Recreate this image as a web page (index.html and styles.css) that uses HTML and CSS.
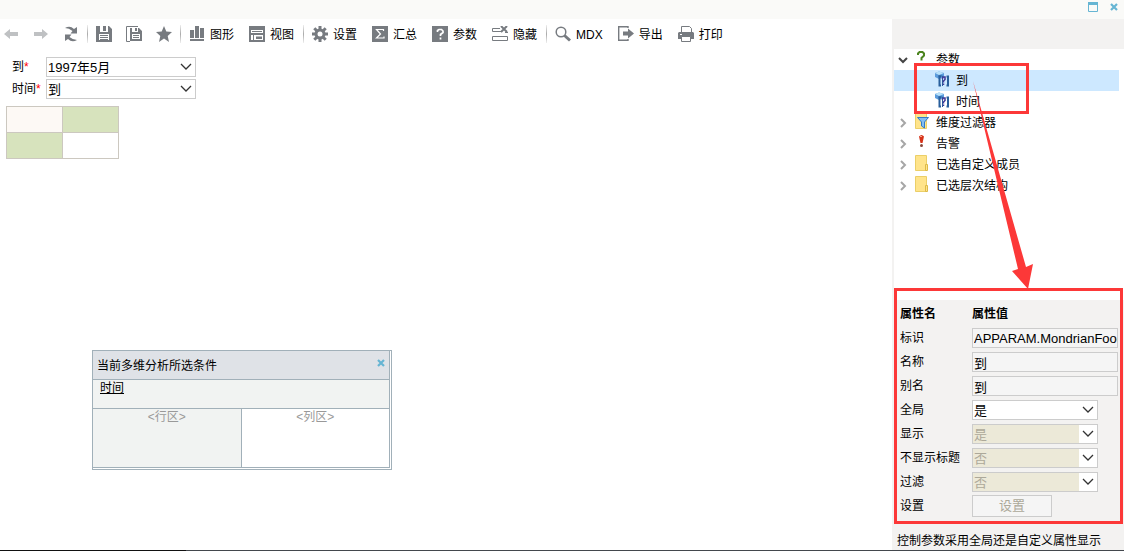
FILE: index.html
```html
<!DOCTYPE html>
<html lang="zh-CN">
<head>
    <meta charset="utf-8">
    <meta name="viewport" content="width=device-width, initial-scale=1.0">
    <title>多维分析</title>
    <link rel="stylesheet" href="styles.css">
</head>
<body>

    <!-- 窗口标题栏 -->
    <header class="titlebar">
        <button class="icon-button" aria-label="最大化">
            <svg width="10" height="10" viewBox="0 0 10 10"><path d="M.5 1.5h9v8h-9z" fill="none" stroke="#66b5d3"/><path d="M0 0h10v3H0z" fill="#66b5d3"/></svg>
        </button>
        <button class="icon-button" aria-label="关闭">
            <svg width="8" height="8" viewBox="0 0 8 8"><path d="M1 1l6 6M7 1L1 7" stroke="#66b5d3" stroke-width="2.2"/></svg>
        </button>
    </header>

    <div class="workspace">
        <main class="main">

            <!-- 工具栏 -->
            <div class="toolbar">
                <button class="tool" aria-label="后退" disabled>
                    <svg width="16" height="16" viewBox="0 0 16 16"><path d="M1 8l6-5v3h8v4H7v3z" fill="#bfc1c3"/></svg>
                </button>
                <button class="tool" aria-label="前进" disabled>
                    <svg width="16" height="16" viewBox="0 0 16 16"><path d="M15 8L9 3v3H1v4h8v3z" fill="#bfc1c3"/></svg>
                </button>
                <button class="tool" aria-label="刷新">
                    <svg width="16" height="16" viewBox="0 0 16 16"><g fill="#777b80"><path d="M2 2q5-3 9 1l3-2v6.500H7.500L9.500 5Q6 2 2 2z"/><path d="M14 14q-5 3-9-1l-3 2V8.500h6.500L6.500 11q3.500 3 7.500 3z"/></g></svg>
                </button>
                <span class="separator"></span>
                <button class="tool" aria-label="保存">
                    <svg width="16" height="16" viewBox="0 0 16 16"><path d="M0 0h4v6h8V0h1l3 3v13H0z" fill="#777b80"/><path d="M7 0h3v5H7z" fill="#777b80"/><path d="M3 8h10v6H3z" fill="#fff"/><path d="M4 9.500h8M4 11.500h8M4 13.500h8" stroke="#777b80"/></svg>
                </button>
                <button class="tool" aria-label="另存为">
                    <svg width="16" height="16" viewBox="0 0 16 16"><path d="M12 .5H.5v15H4" fill="none" stroke="#777b80"/><path d="M4 2h2v4h6V2h1l3 3v10H4z" fill="#777b80"/><path d="M9 2h2v3H9z" fill="#777b80"/><path d="M6 8h8v5H6z" fill="#fff"/><path d="M7 9.500h6M7 11.500h6" stroke="#777b80"/></svg>
                </button>
                <button class="tool" aria-label="收藏">
                    <svg width="16" height="16" viewBox="0 0 16 16"><path d="M8 0l2.300 5.500 5.700.5-4.300 3.900L13 16l-5-3.400L3 16l1.300-6.100L0 6l5.700-.5z" fill="#777b80"/></svg>
                </button>
                <span class="separator"></span>
                <button class="tool tool-text">
                    <svg width="16" height="16" viewBox="0 0 16 16"><path d="M1 4h4v8H1zM6 0h4v12H6zM11 2h4v10h-4zM1 13h14v2H1z" fill="#777b80"/></svg>
                    <span>图形</span>
                </button>
                <button class="tool tool-text">
                    <svg width="16" height="16" viewBox="0 0 16 16"><path d="M0 0h16v16H0z" fill="#777b80"/><path d="M2 4h12v3H2zM2 9h2v5H2zM5 9h9v5H5z" fill="#fff"/><path d="M3 5h10v1H3zM7 10.500h6V13H7z" fill="#777b80"/></svg>
                    <span>视图</span>
                </button>
                <span class="separator"></span>
                <button class="tool tool-text">
                    <svg width="16" height="16" viewBox="0 0 16 16"><path d="M8 0v16M0 8h16M2.300 2.300l11.400 11.400M13.700 2.300L2.300 13.700" stroke="#777b80" stroke-width="3"/><circle cx="8" cy="8" r="5.500" fill="#777b80"/><circle cx="8" cy="8" r="2.500" fill="#fff"/></svg>
                    <span>设置</span>
                </button>
                <button class="tool tool-text">
                    <svg width="16" height="16" viewBox="0 0 16 16"><path d="M0 0h16v16H0z" fill="#777b80"/><path d="M11.500 5V3.500h-7L8.500 8l-4 4h7.500v-1.500" fill="none" stroke="#fff" stroke-width="1.200"/></svg>
                    <span>汇总</span>
                </button>
                <button class="tool tool-text">
                    <svg width="16" height="16" viewBox="0 0 16 16"><path d="M0 0h16v16H0z" fill="#777b80"/><path d="M5.500 6V4.500L7 3.500h2.500L11 5v1.500L8.500 8.500V10M8.500 11.500v2" fill="none" stroke="#fff" stroke-width="1.700"/></svg>
                    <span>参数</span>
                </button>
                <button class="tool tool-text">
                    <svg width="16" height="16" viewBox="0 0 16 16"><path d="M8 2.500H.5v3H9M13 6.500h3M.5 10.500h15v4H.5z" fill="none" stroke="#777b80"/><path d="M9 0l6 6M15 0L9 6" stroke="#777b80" stroke-width="2"/></svg>
                    <span>隐藏</span>
                </button>
                <span class="separator"></span>
                <button class="tool tool-text">
                    <svg width="16" height="16" viewBox="0 0 16 16"><circle cx="6" cy="6" r="4.800" fill="none" stroke="#777b80" stroke-width="1.500"/><path d="M9.500 9.500l5.500 5" stroke="#777b80" stroke-width="3"/></svg>
                    <span>MDX</span>
                </button>
                <button class="tool tool-text">
                    <svg width="16" height="16" viewBox="0 0 16 16"><path d="M10 2V.700H.700v13.600H10V13" fill="none" stroke="#777b80" stroke-width="1.400"/><path d="M5 5.500h5V2.500l6 5-6 5V9.500H5z" fill="#777b80"/></svg>
                    <span>导出</span>
                </button>
                <button class="tool tool-text">
                    <svg width="16" height="16" viewBox="0 0 16 16"><path d="M3.500 6V.5h8l2 2V6" fill="#fff" stroke="#777b80"/><path d="M1 6h14l1 1v6H0V7z" fill="#777b80"/><path d="M3.500 10.500h9v5h-9z" fill="#fff" stroke="#777b80"/><path d="M2 8.500h2" stroke="#fff"/></svg>
                    <span>打印</span>
                </button>
            </div>

            <!-- 参数 -->
            <form class="params">
                <label for="paramTo">到<span class="required">*</span></label>
                <select id="paramTo" class="dropdown"><option>1997年5月</option></select>
                <label for="paramTime">时间<span class="required">*</span></label>
                <select id="paramTime" class="dropdown"><option>到</option></select>
            </form>

            <table class="pivot">
                <tr><td class="corner"></td><td class="head"></td></tr>
                <tr><td class="head"></td><td></td></tr>
            </table>

            <!-- 浮动窗口 -->
            <section class="dialog">
                <div class="dialog-inner">
                    <div class="dialog-title">
                        <span>当前多维分析所选条件</span>
                        <button class="icon-button" aria-label="关闭">
                            <svg width="8" height="8" viewBox="0 0 8 8"><path d="M1 1l6 6M7 1L1 7" stroke="#66b5d3" stroke-width="2.200"/></svg>
                        </button>
                    </div>
                    <div class="dialog-filter"><a href="#">时间</a></div>
                    <div class="dialog-areas">
                        <div class="area row-area">&lt;行区&gt;</div>
                        <div class="area">&lt;列区&gt;</div>
                    </div>
                </div>
            </section>
        </main>

        <aside class="sidebar">
            <ul class="tree">
                <li class="node">
                    <svg class="toggle" width="10" height="10" viewBox="0 0 10 10"><path d="M1 3l4 4 4-4" fill="none" stroke="#444" stroke-width="2"/></svg>
                    <svg class="node-icon" width="16" height="16" viewBox="0 0 16 16"><path d="M4 5V3.500L5.500 2h3L10 3.500v2L7.500 8v2.500" fill="none" stroke="#4d8520" stroke-width="2"/></svg>
                    参数
                </li>
                <li class="node child selected">
                    <svg class="node-icon" width="16" height="16" viewBox="0 0 16 16"><path d="M0 2l4-1.500L9 2v4L4 8 0 6z" fill="#5b9bdc"/><path d="M0 2l4-1.500L9 2 4 4z" fill="#b9e2fa"/><path d="M3.500 5h4v10" fill="none" stroke="#285f9c"/><path d="M6 5.500H4.500v9H6M11.500 5.500H13v9h-1.500" fill="none" stroke="#285f9c" stroke-width="2"/><path d="M7.500 8V7L8.500 6h1.500v2.500L8.500 10v1.500M8.500 12.500V14" fill="none" stroke="#3f3797" stroke-width="1.500"/></svg>
                    到
                </li>
                <li class="node child">
                    <svg class="node-icon" width="16" height="16" viewBox="0 0 16 16"><path d="M0 2l4-1.500L9 2v4L4 8 0 6z" fill="#5b9bdc"/><path d="M0 2l4-1.500L9 2 4 4z" fill="#b9e2fa"/><path d="M3.500 5h4v10" fill="none" stroke="#285f9c"/><path d="M6 5.500H4.500v9H6M11.500 5.500H13v9h-1.500" fill="none" stroke="#285f9c" stroke-width="2"/><path d="M7.500 8V7L8.500 6h1.500v2.500L8.500 10v1.500M8.500 12.500V14" fill="none" stroke="#3f3797" stroke-width="1.500"/></svg>
                    时间
                </li>
                <li class="node">
                    <svg class="toggle" width="10" height="10" viewBox="0 0 10 10"><path d="M3 1l4 4-4 4" fill="none" stroke="#a6a6a6" stroke-width="2"/></svg>
                    <svg class="node-icon" width="16" height="16" viewBox="0 0 16 16"><path d="M1.500.5h11v15h-11z" fill="#ffe48b" stroke="#ebcf68"/><path d="M3.500 4.500h11L10.500 9v6l-3-2V9z" fill="#83bdf2" stroke="#327cc8"/></svg>
                    维度过滤器
                </li>
                <li class="node">
                    <svg class="toggle" width="10" height="10" viewBox="0 0 10 10"><path d="M3 1l4 4-4 4" fill="none" stroke="#a6a6a6" stroke-width="2"/></svg>
                    <svg class="node-icon" width="16" height="16" viewBox="0 0 16 16"><path d="M5 2.500Q7.500-.5 10 2.500L8.500 9h-2z" fill="#d63218"/><path d="M6 2.500h2" stroke="#f6a58c"/><circle cx="7.500" cy="11.500" r="1.500" fill="#8a4a3c"/></svg>
                    告警
                </li>
                <li class="node">
                    <svg class="toggle" width="10" height="10" viewBox="0 0 10 10"><path d="M3 1l4 4-4 4" fill="none" stroke="#a6a6a6" stroke-width="2"/></svg>
                    <svg class="node-icon" width="16" height="16" viewBox="0 0 16 16"><path d="M1.500.5h11v15h-11z" fill="#ffe48b" stroke="#ebcf68"/><path d="M11.500 9.500h2v6h-2z" fill="#ffe48b" stroke="#ddba48"/></svg>
                    已选自定义成员
                </li>
                <li class="node">
                    <svg class="toggle" width="10" height="10" viewBox="0 0 10 10"><path d="M3 1l4 4-4 4" fill="none" stroke="#a6a6a6" stroke-width="2"/></svg>
                    <svg class="node-icon" width="16" height="16" viewBox="0 0 16 16"><path d="M1.500.5h11v15h-11z" fill="#ffe48b" stroke="#ebcf68"/><path d="M11.500 9.500h2v6h-2z" fill="#ffe48b" stroke="#ddba48"/></svg>
                    已选层次结构
                </li>
            </ul>

            <!-- 属性 -->
            <div class="properties">
                <table class="property-table">
                    <tr><th>属性名</th><th>属性值</th></tr>
                    <tr><td><label for="propId">标识</label></td><td><input id="propId" class="field" value="APPARAM.MondrianFoodMart" readonly></td></tr>
                    <tr><td><label for="propName">名称</label></td><td><input id="propName" class="field" value="到" readonly></td></tr>
                    <tr><td><label for="propAlias">别名</label></td><td><input id="propAlias" class="field" value="到" readonly></td></tr>
                    <tr><td><label for="propGlobal">全局</label></td><td><select id="propGlobal" class="dropdown"><option>是</option></select></td></tr>
                    <tr><td><label for="propShow">显示</label></td><td><select id="propShow" class="dropdown" disabled><option>是</option></select></td></tr>
                    <tr><td><label for="propNoTitle">不显示标题</label></td><td><select id="propNoTitle" class="dropdown" disabled><option>否</option></select></td></tr>
                    <tr><td><label for="propFilter">过滤</label></td><td><select id="propFilter" class="dropdown" disabled><option>否</option></select></td></tr>
                    <tr><td><label for="propSetting">设置</label></td><td><button id="propSetting" class="setting-button" disabled>设置</button></td></tr>
                </table>
                <p class="description">控制参数采用全局还是自定义属性显示</p>
            </div>

            <!-- 标注 -->
            <svg class="marks" width="232" height="531" viewBox="0 0 232 531">
                <g fill="none" stroke="#fc3838" stroke-width="3">
                    <path d="M23.500 45.500h112v48h-112z"/>
                    <path d="M3.500 270.500h226v233h-226z"/>
                </g>
                <path d="M81 62l53 186 7-3-5 25-16-18 6-2z" fill="#fc3838"/>
            </svg>
        </aside>
    </div>

    <div class="taskbar"></div>

</body>
</html>
```
FILE: styles.css
```css
* {
    box-sizing: border-box;
}

body {
    display: flex;
    flex-direction: column;
    min-height: 100vh;
    margin: 0;
    background: #fff;
    color: #000;
    font: 12px/18px "Liberation Sans", "Noto Sans CJK SC", sans-serif;
}

button, input, select {
    font-family: inherit;
    color: inherit;
}

svg {
    flex: none;
    display: block;
}

/* 标题栏 */
.titlebar {
    display: flex;
    justify-content: flex-end;
    gap: 12px;
    height: 19px;
    padding: 1px 6px 0 0;
    background: #fafaf8;
}

.icon-button {
    display: flex;
    align-items: center;
    height: 12px;
    padding: 0;
    border: none;
    background: none;
    cursor: pointer;
}

.workspace {
    display: flex;
    flex: 1;
}

.main {
    position: relative;
    flex: 1;
}

/* 工具栏 */
.toolbar {
    display: flex;
    align-items: center;
    height: 30px;
    padding-right: 4px;
}

.tool {
    display: flex;
    align-items: center;
    gap: 5px;
    padding: 0 7px;
    border: none;
    background: none;
    font-size: 12px;
    line-height: 18px;
    white-space: nowrap;
    cursor: pointer;
}

.tool:first-child {
    padding-left: 3px;
}

.tool-text {
    padding-right: 8px;
}

.tool span {
    padding-top: 2px;
}

.separator {
    width: 1px;
    height: 18px;
    margin: 0 1px;
    background: linear-gradient(#eee, #aaa, #eee);
}

/* 参数 */
.params {
    display: grid;
    grid-template-columns: 34px 150px;
    gap: 2px 0;
    align-items: center;
    padding: 8px 12px 0;
}

.required {
    color: #f00;
}

.dropdown {
    width: 126px;
    height: 20px;
    padding: 1px 20px 0 1px;
    border: 1px solid #ccc;
    border-radius: 0;
    appearance: none;
    background: #fff url("data:image/svg+xml,%3Csvg xmlns='http://www.w3.org/2000/svg' width='18' height='18'%3E%3Cpath fill='%23fff' d='M0 0h18v18H0z'/%3E%3Cpath fill='none' stroke='%23333' stroke-width='1.300' d='M4 6l5 5 5-5'/%3E%3C/svg%3E") no-repeat right center;
    font-size: 13px;
    line-height: 18px;
}

.params .dropdown {
    width: 100%;
}

.dropdown:disabled {
    background-color: #ece9d8;
    color: #aca899;
    opacity: 1;
}

.pivot {
    margin: 7px 6px;
    border-collapse: collapse;
}

.pivot td {
    width: 56px;
    height: 26px;
    padding: 0;
    border: 1px solid #ccc8c0;
}

.pivot .corner {
    background: #fdf9f5;
}

.pivot .head {
    background: #d7e3bd;
}

/* 浮动窗口 */
.dialog {
    position: absolute;
    left: 92px;
    top: 331px;
    width: 300px;
    padding: 0 1px 1px 0;
    border: 1px solid #a1b0b9;
    background: #fff;
}

.dialog-inner {
    border: solid #a1b0b9;
    border-width: 0 1px 1px 0;
}

.dialog-title {
    display: flex;
    justify-content: space-between;
    padding: 6px 4px 4px;
    background: #dfe2e7;
}

.dialog-filter {
    height: 30px;
    padding: 0 7px;
    border: solid #a1b0b9;
    border-width: 1px 0;
    background: #f1f3f2;
    line-height: 16px;
}

.dialog-filter a {
    color: #000;
}

.dialog-areas {
    display: flex;
    height: 58px;
    line-height: 16px;
}

.area {
    flex: 1;
    color: #999;
    text-align: center;
}

.row-area {
    border-right: 1px solid #a1b0b9;
    background: #f1f3f2;
}

/* 右侧栏 */
.sidebar {
    position: relative;
    display: flex;
    flex-direction: column;
    width: 232px;
    padding: 30px 0 0 2px;
    background: #f3f2f1;
}

.tree {
    flex: 1;
    margin: 0;
    padding: 0;
    background: #fff;
    list-style: none;
}

.node {
    display: flex;
    align-items: center;
    height: 21px;
    margin-right: 5px;
    padding-left: 4px;
}

.node.child {
    padding-left: 41px;
}

.node.selected {
    background: #cde8ff;
}

.toggle {
    margin-right: 6px;
}

.node-icon {
    margin: 0 6px 4px 0;
}

.child .node-icon {
    margin-right: 5px;
}

/* 属性 */
.property-table {
    width: 100%;
    margin-top: 2px;
    border-collapse: collapse;
    table-layout: fixed;
}

.property-table tr {
    height: 24px;
}

.property-table th, .property-table td {
    padding: 0 6px 0 0;
    text-align: left;
    vertical-align: middle;
}

.property-table th:first-child, .property-table td:first-child {
    width: 78px;
    padding: 0 0 0 6px;
}

.property-table .dropdown, .field, .setting-button {
    display: block;
}

.field {
    width: 100%;
    height: 20px;
    padding: 0 0 0 1px;
    border: 1px solid #ccc;
    background: #f5f5f5;
    font-size: 13px;
}

.setting-button {
    width: 80px;
    height: 22px;
    padding: 0;
    border: 1px solid #ccc;
    background: #f5f5f5;
    font-size: 13px;
    line-height: 18px;
}

.setting-button:disabled {
    color: #aca899;
}

.description {
    margin: 0;
    padding: 15px 3px 0;
    line-height: 17px;
}

.marks {
    position: absolute;
    left: 0;
    top: 0;
    pointer-events: none;
}

.taskbar {
    height: 1px;
    background: linear-gradient(to right, #111 186px, #43474d 186px);
}
```
